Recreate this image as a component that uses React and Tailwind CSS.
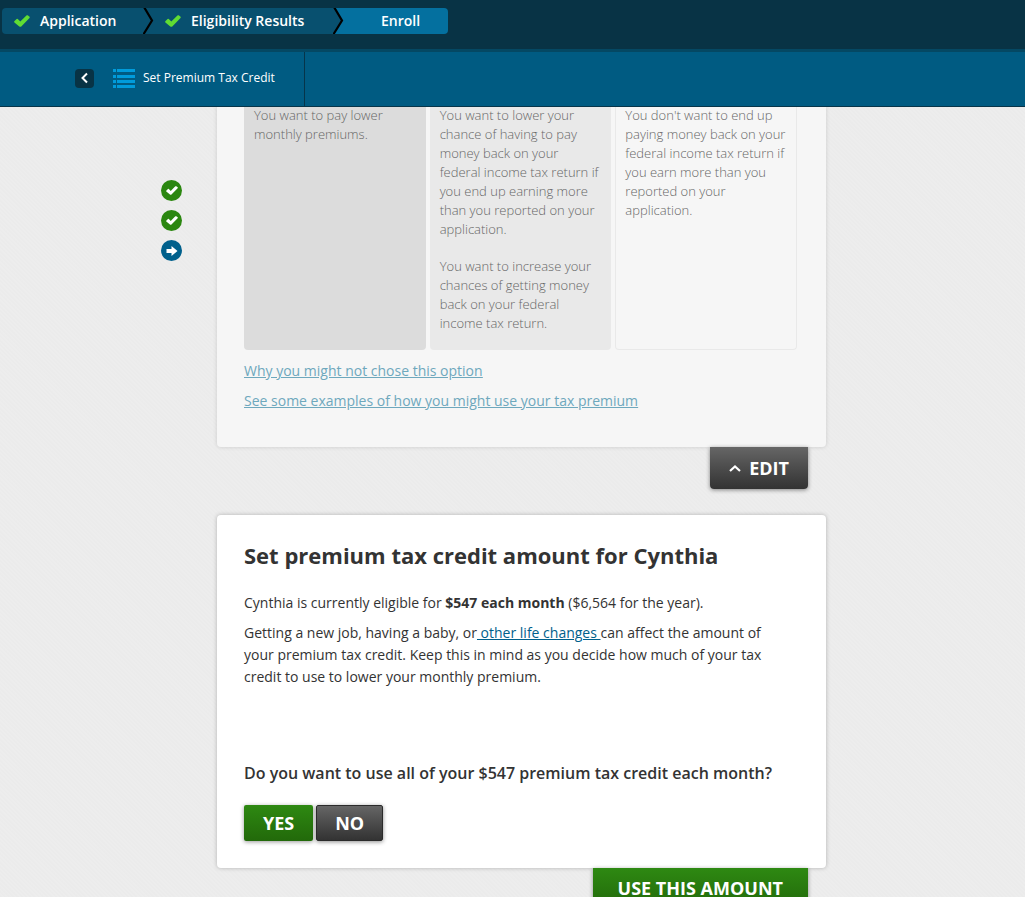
import React from 'react';

const darkButton =
  'bg-linear-to-b from-[#666666] to-[#333333] text-white font-bold text-lg shadow-[0_1px_4px_rgba(0,0,0,0.45)]';
const greenButton =
  'bg-linear-to-b from-[#2e8912] to-[#22690a] text-white font-bold text-lg shadow-[0_1px_4px_rgba(0,0,0,0.4)]';

const columns = [
  {
    style: 'bg-[#dcdcdc] px-[10px]',
    text: ['You want to pay lower monthly premiums.'],
  },
  {
    style: 'bg-[#e9e9e9] px-[10px]',
    text: [
      'You want to lower your chance of having to pay money back on your federal income tax return if you end up earning more than you reported on your application.',
      'You want to increase your chances of getting money back on your federal income tax return.',
    ],
  },
  {
    style: 'border border-t-0 border-[#e9e9e9] px-[9px]',
    text: [
      "You don't want to end up paying money back on your federal income tax return if you earn more than you reported on your application.",
    ],
  },
];

function Check({ className }) {
  return (
    <svg viewBox="0 0 16 12" className={className} fill="currentColor" aria-hidden="true">
      <path d="M0.300 6.200L2.600 3.900Q3.200 3.500 3.800 4L6.300 6.500L12.400 0.400Q13 0 13.700 0.300L15.600 1.800Q16 2.300 15.500 2.900L7.300 11.400Q6.300 12.200 5.300 11.400L0.400 7.400Q-0.100 6.800 0.300 6.200Z" />
    </svg>
  );
}

function Divider({ fill }) {
  return (
    <svg width="12" height="26" viewBox="0 0 12 26" className="shrink-0" aria-hidden="true">
      <rect width="12" height="26" fill={fill} />
      <path d="M0 0H2L9 12.500L1 26H0Z" fill="#08506f" />
      <path d="M1 -1L9 12.500L0 27" fill="none" stroke="#000" strokeWidth="2.200" />
    </svg>
  );
}

function Steps() {
  return (
    <nav aria-label="Progress" className="flex h-[49px] items-start bg-[#083345] pt-2 pl-0.5 text-sm font-semibold text-white">
      <a href="#application" className="flex h-[26px] w-[141px] items-center gap-[10px] rounded-l bg-[#08506f] pl-3">
        <Check className="h-3 w-4 text-[#60dc33]" />
        Application
      </a>
      <Divider fill="#08506f" />
      <a href="#eligibility" className="flex h-[26px] w-[178px] items-center gap-[10px] bg-[#08506f] pl-[10px]">
        <Check className="h-3 w-4 text-[#60dc33]" />
        Eligibility Results
      </a>
      <Divider fill="#04709f" />
      <a href="#enroll" aria-current="step" className="flex h-[26px] w-[103px] items-center rounded-r bg-[#04709f] pl-9">
        Enroll
      </a>
    </nav>
  );
}

function Toolbar() {
  return (
    <div className="flex h-[58px] border-t-3 border-b border-t-[#044863] border-b-[#06354a] bg-[#005b82]">
      <div className="flex items-center border-r border-[#06354a] pr-[29px] pb-[2px] pl-[75px]">
        <button type="button" aria-label="Back" className="flex size-[19px] items-center justify-center rounded-sm bg-[#083345]">
          <svg width="8" height="12" viewBox="0 0 8 12" fill="none" stroke="#fff" strokeWidth="2" aria-hidden="true">
            <path d="M6 1.500L1.500 6L6 10.500" />
          </svg>
        </button>
        <svg width="22" height="19" viewBox="0 0 22 19" className="ml-[19px]" fill="#009bdb" shapeRendering="crispEdges" aria-hidden="true">
          <path d="M0 0h3v3H0zM4 0h18v3H4zM0 6h3v3H0zM4 6h18v3H4zM0 11h3v3H0zM4 11h18v3H4zM0 16h3v3H0zM4 16h18v3H4z" />
        </svg>
        <span className="ml-2 text-xs text-white">Set Premium Tax Credit</span>
      </div>
    </div>
  );
}

function Marker({ current }) {
  return (
    <li className={current ? 'flex size-[21px] items-center justify-center rounded-full bg-[#00608c] text-white' : 'flex size-[21px] items-center justify-center rounded-full bg-[#2b8710] text-white'}>
      {current ? (
        <svg width="12" height="10" viewBox="0 0 12 10" fill="currentColor" aria-hidden="true">
          <path d="M0.500 3H5.500V0L11.500 5L5.500 10V7H0.500Z" />
        </svg>
      ) : (
        <Check className="h-[9px] w-3" />
      )}
    </li>
  );
}

export default function App() {
  return (
    <div className="flex h-screen flex-col overflow-hidden bg-[#ececec] font-['Open_Sans',sans-serif] text-sm text-[#333333]">
      <header className="z-10 shrink-0">
        <Steps />
        <Toolbar />
      </header>
      <main className="flex min-h-0 flex-1 items-start overflow-hidden bg-[repeating-linear-gradient(45deg,#ebebeb_0px,#ebebeb_1px,#ededed_2px,#ededed_3px)] pr-[199px] pl-[161px]">
        <ul aria-label="Sections" className="mt-[73px] mr-[35px] flex flex-col gap-[9px]">
          <Marker />
          <Marker />
          <Marker current />
        </ul>
        <div className="-mt-px min-w-0 flex-1">
          <section className="rounded-b bg-[#f6f6f6] pr-[29px] pb-[35px] pl-[27px] shadow-[0_0_4px_rgba(0,0,0,0.15)]">
            <div className="grid h-[244px] grid-cols-3 gap-1">
              {columns.map((column) => (
                <div key={column.style} className={'space-y-[18px] rounded-b-sm text-[13px] leading-[19px] font-light text-[#666666] ' + column.style}>
                  {column.text.map((line) => (
                    <p key={line}>{line}</p>
                  ))}
                </div>
              ))}
            </div>
            <div className="mt-[10px] flex flex-col items-start gap-2 leading-[22px] text-[#6ea8bd] underline">
              <a href="#why">Why you might not chose this option</a>
              <a href="#examples">See some examples of how you might use your tax premium</a>
            </div>
          </section>
          <div className="flex justify-end pr-[18px]">
            <button type="button" className={'flex h-[42px] items-center gap-2 rounded-b-sm px-[19px] ' + darkButton}>
              <svg width="12" height="8" viewBox="0 0 12 8" fill="none" stroke="#fff" strokeWidth="2.200" aria-hidden="true">
                <path d="M1 7L6 2.500L11 7" />
              </svg>
              EDIT
            </button>
          </div>
          <section className="mt-[26px] rounded bg-white pt-[25px] pr-[29px] pb-[27px] pl-[27px] shadow-[0_0_4px_rgba(0,0,0,0.25)]">
            <h1 className="text-[22px] leading-[30px] font-bold">Set premium tax credit amount for Cynthia</h1>
            <p className="mt-[22px] leading-[22px]">
              Cynthia is currently eligible for <strong>$547 each month</strong> ($6,564 for the year).
            </p>
            <p className="mt-2 pr-4 leading-[22px]">
              Getting a new job, having a baby, or
              <a href="#changes" className="text-[#00608c] underline"> other life changes </a>
              can affect the amount of your premium tax credit. Keep this in mind as you decide how much of your tax credit to use to lower your monthly premium.
            </p>
            <h2 className="mt-[73px] text-base leading-6 font-semibold">
              Do you want to use all of your $547 premium tax credit each month?
            </h2>
            <div className="mt-5 flex gap-[3px]">
              <button type="button" className={'h-9 rounded-xs px-[19px] ' + greenButton}>YES</button>
              <button type="button" className={'h-9 rounded-xs border border-[#2b2b2b] px-[18px] ' + darkButton}>NO</button>
            </div>
          </section>
          <div className="flex justify-end pr-[18px]">
            <button type="button" className={'h-10 rounded-b-sm px-[25px] ' + greenButton}>USE THIS AMOUNT</button>
          </div>
        </div>
      </main>
    </div>
  );
}
